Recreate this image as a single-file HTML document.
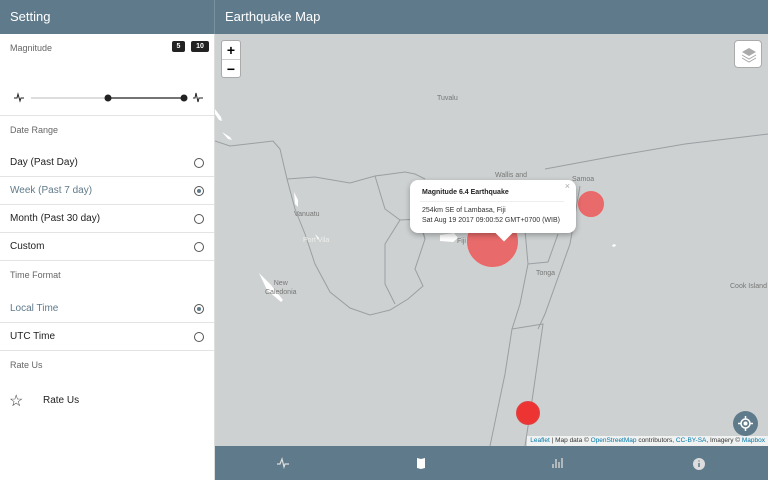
<!DOCTYPE html>
<html><head><meta charset="utf-8"><style>
*{margin:0;padding:0;box-sizing:border-box}
body{width:768px;height:480px;overflow:hidden;font-family:"Liberation Sans",sans-serif;background:#fff;position:relative}
.hdr{position:absolute;top:0;height:34px;background:#5f7a8a;color:#fff;font-size:13px;line-height:34px;padding-left:10px}
.lbl{position:absolute;left:10px;font-size:9px;color:#666}
.row{position:absolute;left:0;width:214px;height:28px;border-bottom:1px solid #e3e3e3;font-size:10px;color:#222;line-height:28px;padding-left:10px}
.row.sel{color:#5f7a8a}
.radio{position:absolute;right:10px;top:9px;width:10px;height:10px;border:1px solid #555;border-radius:50%}
.radio.on::after{content:"";position:absolute;left:2px;top:2px;width:4px;height:4px;border-radius:50%;background:#5f7a8a}
.div{position:absolute;left:0;width:214px;border-top:1px solid #e3e3e3}
.badge{position:absolute;top:41px;height:11px;background:#222;color:#fff;font-size:7px;font-weight:bold;line-height:11px;text-align:center;border-radius:2px}
#map{position:absolute;left:215px;top:34px;width:553px;height:412px;background:#cdd1d1;overflow:hidden}
#nav{position:absolute;left:215px;top:446px;width:553px;height:34px;background:#5f7a8a}
.ml{position:absolute;font-size:7px;color:#777}
</style></head><body>
<div class="hdr" style="left:0;width:214px">Setting</div>
<div class="hdr" style="left:214px;width:554px;border-left:1px solid #7a909c">Earthquake Map</div>
<div class="lbl" style="top:43px">Magnitude</div>
<div class="badge" style="left:172px;width:13px">5</div>
<div class="badge" style="left:191px;width:18px">10</div>
<svg style="position:absolute;left:0;top:88px" width="214" height="20">
<path d="M14 10h3l1-4 2 7 1-3h3" stroke="#222" fill="none" stroke-width="1"/>
<line x1="31" y1="10" x2="108" y2="10" stroke="#bbb" stroke-width="1"/>
<line x1="108" y1="10" x2="184" y2="10" stroke="#222" stroke-width="1.2"/>
<circle cx="108" cy="10" r="3.5" fill="#222"/><circle cx="184" cy="10" r="3.5" fill="#222"/>
<path d="M193 10h2l1-5 2 9 1-4h4" stroke="#222" fill="none" stroke-width="1"/>
</svg>
<div class="div" style="top:115px"></div>
<div class="lbl" style="top:125px">Date Range</div>
<div class="row" style="top:149px">Day (Past Day)<span class="radio"></span></div>
<div class="row sel" style="top:177px">Week (Past 7 day)<span class="radio on"></span></div>
<div class="row" style="top:205px">Month (Past 30 day)<span class="radio"></span></div>
<div class="row" style="top:233px">Custom<span class="radio"></span></div>
<div class="lbl" style="top:270px">Time Format</div>
<div class="row sel" style="top:295px">Local Time<span class="radio on"></span></div>
<div class="row" style="top:323px">UTC Time<span class="radio"></span></div>
<div class="lbl" style="top:360px">Rate Us</div>
<div style="position:absolute;left:9px;top:391px;font-size:16px;color:#333">☆</div>
<div style="position:absolute;left:43px;top:395px;font-size:10px;color:#222">Rate Us</div>
<div style="position:absolute;left:214px;top:34px;width:1px;height:446px;background:#ddd"></div>
<div id="map">
<svg width="553" height="412" style="position:absolute;left:0;top:0" fill="none" stroke="#9a9fa2" stroke-width="1">
<path d="M0 107 L15 112 L58 107 L65 115 L72 145 L80 175 L90 200 L100 230 L115 258 L135 274 L155 281 L175 276 L193 265 L208 252 L200 235 L210 205 L205 190"/>
<path d="M72 145 L100 143 L135 149 L160 142 L190 138 L200 140 L210 145"/>
<path d="M160 142 L170 175 L185 186 L170 210 L170 250 L180 270"/>
<path d="M185 186 L205 185 L210 205"/>
<path d="M310 196 L313 230 L333 228 L343 200"/>
<path d="M365 152 L355 210 L330 280 L323 295"/>
<path d="M313 230 L305 270 L297 295 L290 340 L275 412"/>
<path d="M297 295 L328 290 L318 360 L310 412"/>
<path d="M330 135 L400 122 L470 110 L553 100"/>
</svg>
<svg width="553" height="412" style="position:absolute;left:0;top:0" fill="#fff" stroke="none">
<path d="M0 75 l6 8 1 4 -3 -1 -4 -6z"/>
<path d="M7 98 l8 5 2 3 -4 -1z"/>
<path d="M79 158 l4 8 0 7 -3 -3z"/>
<path d="M100 200 l4 4 -1 2z"/>
<path d="M44 239 l12 12 12 15 -2 2 -14 -12z"/>
<path d="M225 201 l14 -2 4 5 -5 4 -13 -1z"/>
<path d="M397 211 l3 -1 1 2 -3 1z"/>
</svg>
<div class="ml" style="left:222px;top:61px">Tuvalu</div>
<div class="ml" style="left:280px;top:138px">Wallis and</div>
<div class="ml" style="left:357px;top:142px">Samoa</div>
<div class="ml" style="left:79px;top:177px">Vanuatu</div>
<div class="ml" style="left:88px;top:203px;color:#eee">Port Vila</div>
<div class="ml" style="left:242px;top:204px">Fiji</div>
<div class="ml" style="left:321px;top:236px">Tonga</div>
<div class="ml" style="left:50px;top:245px;text-align:center;line-height:9px">New<br>Caledonia</div>
<div class="ml" style="left:515px;top:249px">Cook Island</div>
<div style="position:absolute;left:252px;top:182px;width:51px;height:51px;border-radius:50%;background:rgba(236,88,88,.85);border:1px solid #e66"></div>
<div style="position:absolute;left:363px;top:157px;width:26px;height:26px;border-radius:50%;background:rgba(236,88,88,.85);border:1px solid #e66"></div>
<div style="position:absolute;left:301px;top:367px;width:24px;height:24px;border-radius:50%;background:#ee3333;border:1px solid #d44"></div>
<div style="position:absolute;left:195px;top:146px;width:166px;height:53px;background:#fff;border-radius:8px;box-shadow:0 2px 6px rgba(0,0,0,.3)">
<div style="position:absolute;left:12px;top:9px;font-size:7px;font-weight:bold;color:#222">Magnitude 6.4 Earthquake</div>
<div style="position:absolute;left:10px;right:12px;top:21px;border-top:1px solid #eee"></div>
<div style="position:absolute;left:12px;top:26px;font-size:7px;color:#333;line-height:10px">254km SE of Lambasa, Fiji<br>Sat Aug 19 2017 09:00:52 GMT+0700 (WIB)</div>
<div style="position:absolute;right:6px;top:1px;font-size:9px;color:#aaa">×</div>
<div style="position:absolute;left:88px;top:47px;width:12px;height:12px;background:#fff;transform:rotate(45deg)"></div>
</div>
<div style="position:absolute;left:6px;top:6px;width:20px;height:38px;background:#fff;border:1px solid #aaa;border-radius:3px;font-size:14px;font-weight:bold;text-align:center;line-height:18px">+<div style="border-top:1px solid #ccc">−</div></div>
<div style="position:absolute;left:519px;top:6px;width:28px;height:28px;background:#fff;border:1px solid #aaa;border-radius:4px"><svg width="28" height="28"><path d="M14 7l7 4-7 4-7-4z" fill="#aaa"/><path d="M7 14l7 4 7-4M7 17l7 4 7-4" stroke="#aaa" fill="none"/></svg></div>
<div style="position:absolute;left:518px;top:377px;width:25px;height:25px;border-radius:50%;background:#5f7a8a"><svg width="25" height="25"><circle cx="12.5" cy="12.5" r="4.5" stroke="#fff" fill="none" stroke-width="1.5"/><circle cx="12.5" cy="12.5" r="2" fill="#fff"/><path d="M12.5 5v3M12.5 17v3M5 12.5h3M17 12.5h3" stroke="#fff" stroke-width="1.5"/></svg></div>
<div style="position:absolute;right:0;top:402px;height:10px;background:rgba(255,255,255,.7);font-size:6.5px;line-height:10px;padding:0 3px;color:#333"><span style="color:#0078a8">Leaflet</span> | Map data © <span style="color:#0078a8">OpenStreetMap</span> contributors, <span style="color:#0078a8">CC-BY-SA</span>, Imagery © <span style="color:#0078a8">Mapbox</span></div>
</div>
<div id="nav"><svg width="553" height="34">
<path d="M62 18h3l2-5 2 8 1-3h4" stroke="#ddd" fill="none" stroke-width="1.2"/>
<path d="M202 12l4 1 4-1v10l-4 1-4-1z" fill="#fff"/>
<path d="M338 22v-4M341 22v-9M344 22v-6M347 22v-10" stroke="#ccc" stroke-width="1.5"/>
<circle cx="484" cy="18" r="6" fill="#ddd"/><path d="M484 17v4M484 14.5v1" stroke="#5f7a8a" stroke-width="1.5"/>
</svg></div>
</body></html>
